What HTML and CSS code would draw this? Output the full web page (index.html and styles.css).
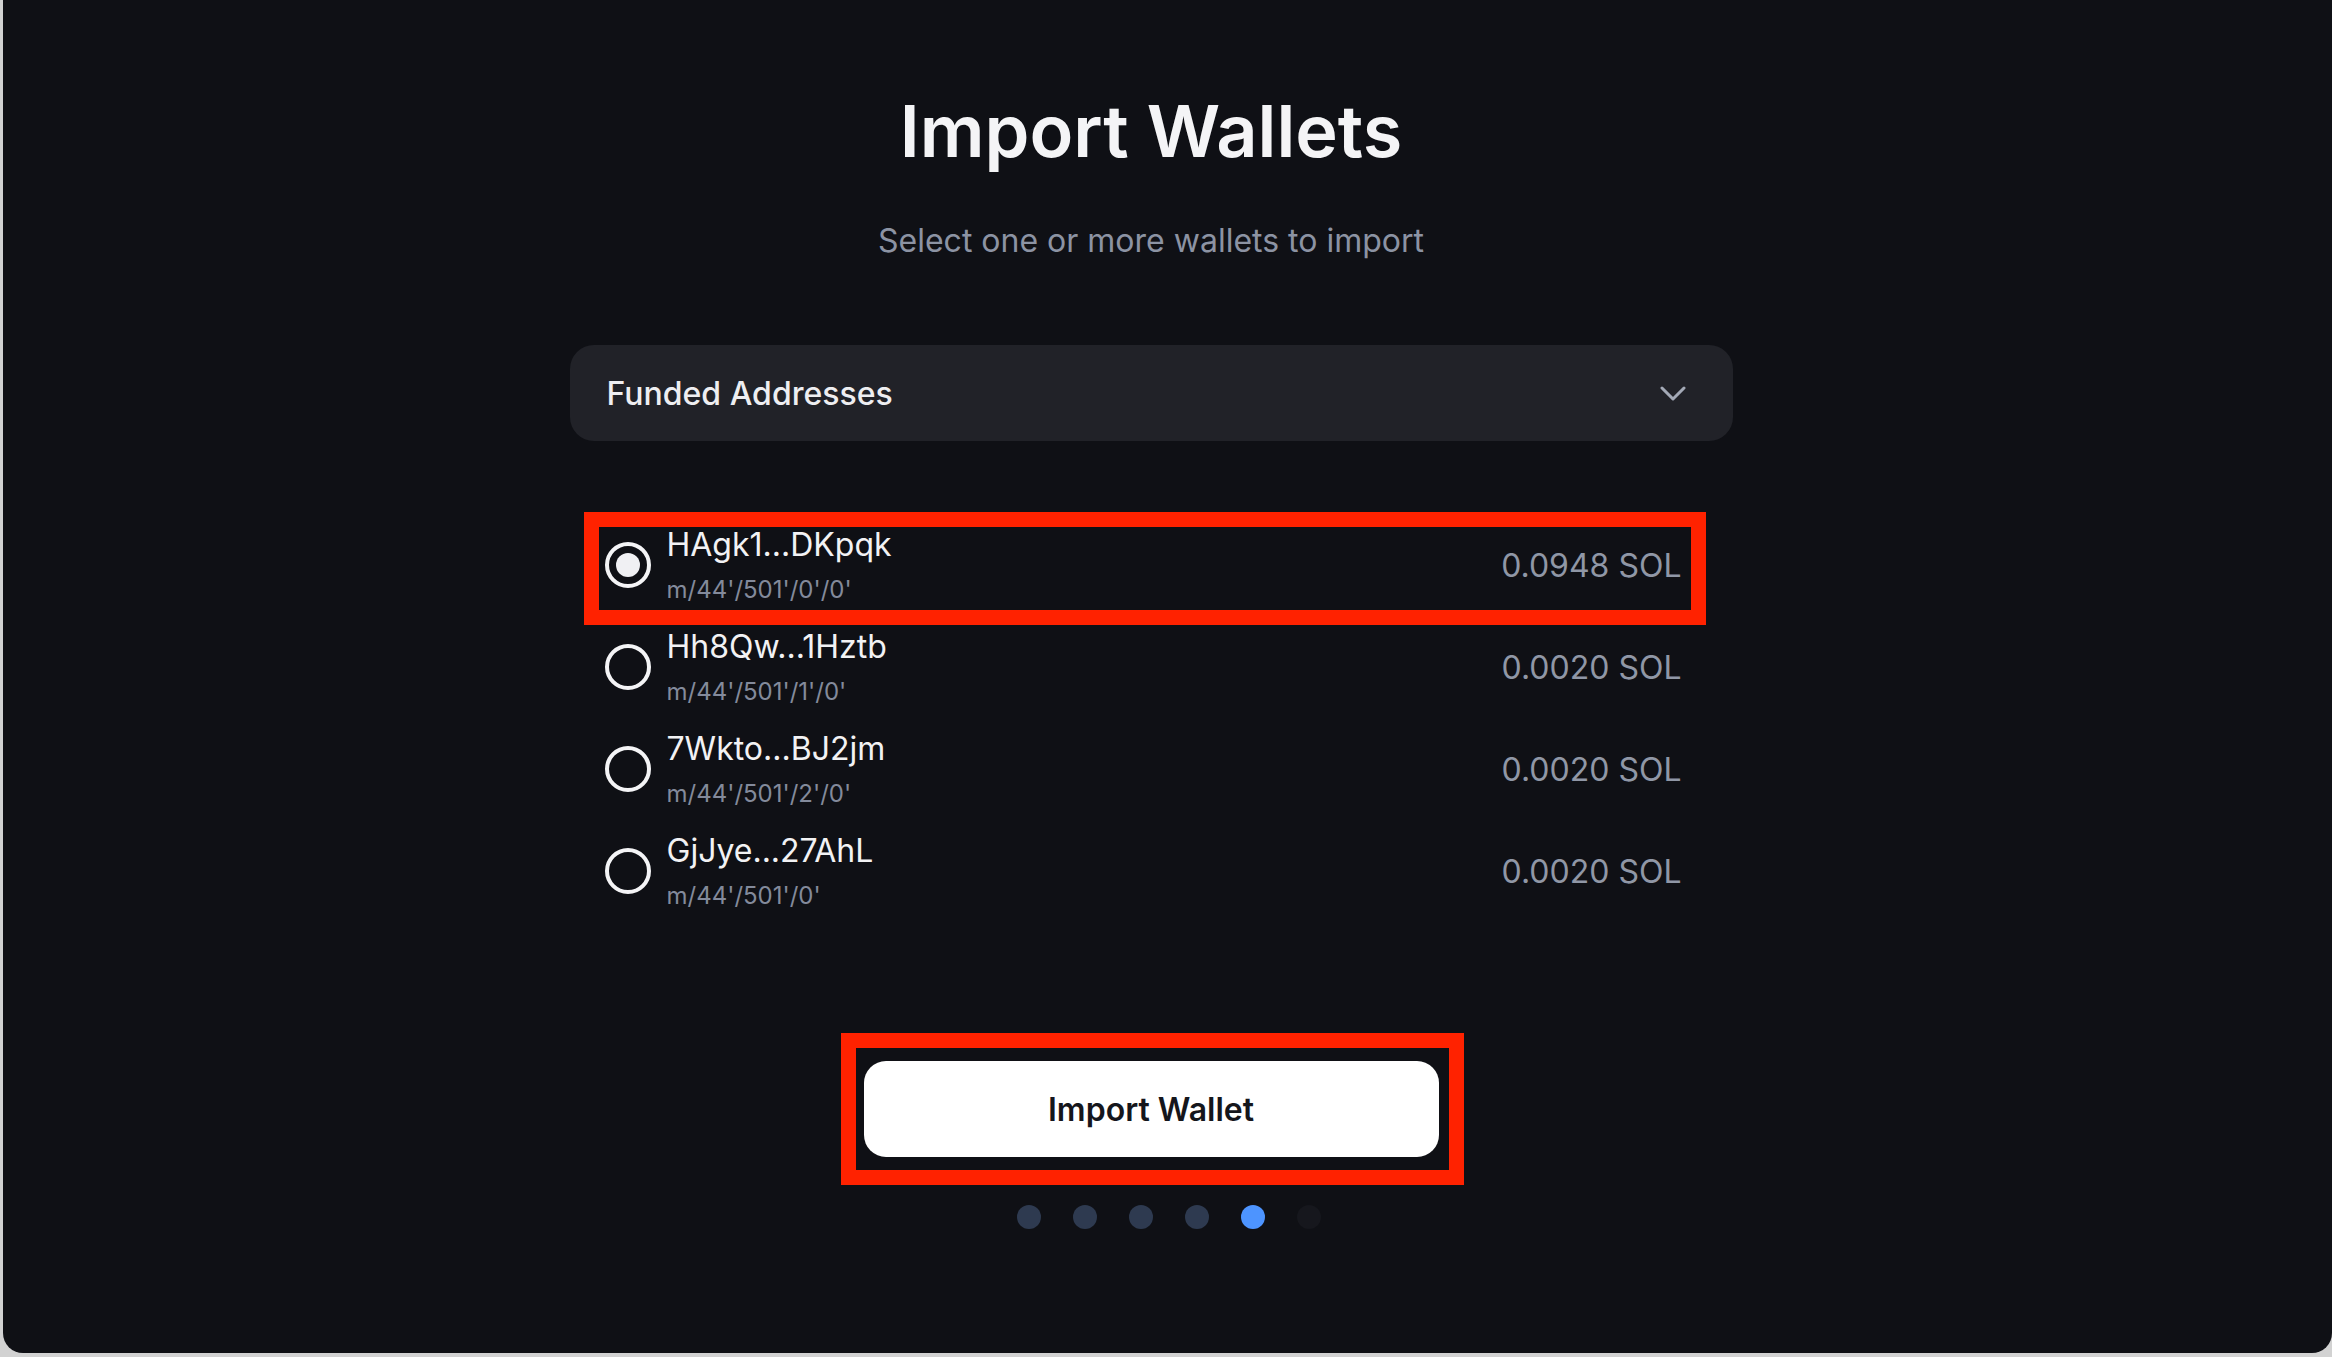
FILE: index.html
```html
<!DOCTYPE html>
<html lang="en">
<head>
<meta charset="utf-8">
<title>Import Wallets</title>
<link rel="stylesheet" href="styles.css">
</head>
<body>
<div class="window">
  <main class="screen">
    <h1 class="title">Import Wallets</h1>
    <p class="subtitle">Select one or more wallets to import</p>

    <div class="select">
      <span class="select-label">Funded Addresses</span>
      <svg class="chevron" width="26" height="15" viewBox="0 0 26 15" aria-hidden="true">
        <path d="M2 2 L13 13 L24 2" fill="none" stroke="currentColor" stroke-width="3" stroke-linecap="round" stroke-linejoin="round"/>
      </svg>
    </div>

    <ul class="wallets">
      <li class="wallet is-selected">
        <span class="radio"></span>
        <div class="wallet-info">
          <span class="addr">HAgk1...DKpqk</span>
          <span class="path">m/44'/501'/0'/0'</span>
        </div>
        <span class="balance">0.0948 SOL</span>
        <span class="highlight highlight-row"></span>
      </li>
      <li class="wallet">
        <span class="radio"></span>
        <div class="wallet-info">
          <span class="addr">Hh8Qw...1Hztb</span>
          <span class="path">m/44'/501'/1'/0'</span>
        </div>
        <span class="balance">0.0020 SOL</span>
      </li>
      <li class="wallet">
        <span class="radio"></span>
        <div class="wallet-info">
          <span class="addr">7Wkto...BJ2jm</span>
          <span class="path">m/44'/501'/2'/0'</span>
        </div>
        <span class="balance">0.0020 SOL</span>
      </li>
      <li class="wallet">
        <span class="radio"></span>
        <div class="wallet-info">
          <span class="addr">GjJye...27AhL</span>
          <span class="path">m/44'/501'/0'</span>
        </div>
        <span class="balance">0.0020 SOL</span>
      </li>
    </ul>

    <div class="actions">
      <button class="btn-primary" type="button">Import Wallet</button>
      <span class="highlight highlight-btn"></span>
    </div>

    <div class="dots">
      <span class="dot"></span>
      <span class="dot"></span>
      <span class="dot"></span>
      <span class="dot"></span>
      <span class="dot dot-active"></span>
      <span class="dot dot-off"></span>
    </div>
  </main>
</div>
</body>
</html>
```

FILE: styles.css
```css
* { box-sizing: border-box; }

html, body {
  margin: 0;
  padding: 0;
}

body {
  background: #d2d2d2;
  font-family: Inter, "Noto Sans", "Liberation Sans", sans-serif;
  width: 2332px;
  height: 1357px;
  overflow: hidden;
}

.window {
  margin-left: 3px;
  height: 1353px;
  background: #0f1015;
  border-bottom-left-radius: 20px;
  border-bottom-right-radius: 20px;
}

.screen {
  display: flex;
  flex-direction: column;
  align-items: center;
  padding-top: 87px;
  padding-right: 33px;
}

.title {
  margin: 0;
  font-size: 72px;
  line-height: 88px;
  font-weight: 600;
  color: #f4f4f6;
  letter-spacing: 0;
}

.subtitle {
  margin: 46px 0 0;
  font-size: 32px;
  line-height: 40px;
  font-weight: 400;
  color: #8c93a3;
}

.select {
  margin-top: 84px;
  width: 1163px;
  height: 96px;
  background: #212228;
  border-radius: 24px;
  display: flex;
  align-items: center;
  justify-content: space-between;
  padding: 0 47px 0 37px;
}

.select-label {
  font-size: 32px;
  font-weight: 500;
  color: #eeeef1;
}

.chevron {
  color: #a3a9b6;
  display: block;
}

.wallets {
  list-style: none;
  margin: 73px 0 0;
  padding: 0 51px 0 35px;
  width: 1163px;
}

.wallet {
  position: relative;
  height: 102px;
  display: flex;
  align-items: center;
}

.radio {
  flex: none;
  width: 46px;
  height: 46px;
  border: 4px solid #f4f4f6;
  border-radius: 50%;
  display: flex;
  align-items: center;
  justify-content: center;
}

.is-selected .radio::after {
  content: "";
  width: 24px;
  height: 24px;
  border-radius: 50%;
  background: #f0f0f3;
}

.wallet-info {
  display: flex;
  flex-direction: column;
  gap: 13px;
  margin-left: 16px;
  flex: 1;
}

.addr {
  font-size: 32px;
  line-height: 36px;
  font-weight: 400;
  color: #f2f2f4;
}

.path {
  font-size: 24px;
  line-height: 28px;
  font-weight: 400;
  color: #838a9b;
}

.balance {
  font-size: 32px;
  font-weight: 400;
  color: #9097a6;
}

.highlight {
  position: absolute;
  border: 15px solid #ff2200;
  pointer-events: none;
}

.highlight-row {
  top: -2px;
  bottom: -9px;
  left: -21px;
  right: -24px;
}

.actions {
  position: relative;
  margin-top: 139px;
}

.btn-primary {
  display: block;
  width: 575px;
  height: 96px;
  border: 0;
  border-radius: 22px;
  background: #ffffff;
  color: #15161c;
  font-family: Inter, "Noto Sans", "Liberation Sans", sans-serif;
  font-size: 32px;
  font-weight: 600;
}

.highlight-btn {
  top: -28px;
  bottom: -28px;
  left: -23px;
  right: -25px;
}

.dots {
  margin-top: 48px;
  margin-left: 36px;
  display: flex;
  gap: 32px;
}

.dot {
  width: 24px;
  height: 24px;
  border-radius: 50%;
  background: #2e3a50;
}

.dot-active {
  background: #4d94ff;
}

.dot-off {
  background: #16171d;
}
```
